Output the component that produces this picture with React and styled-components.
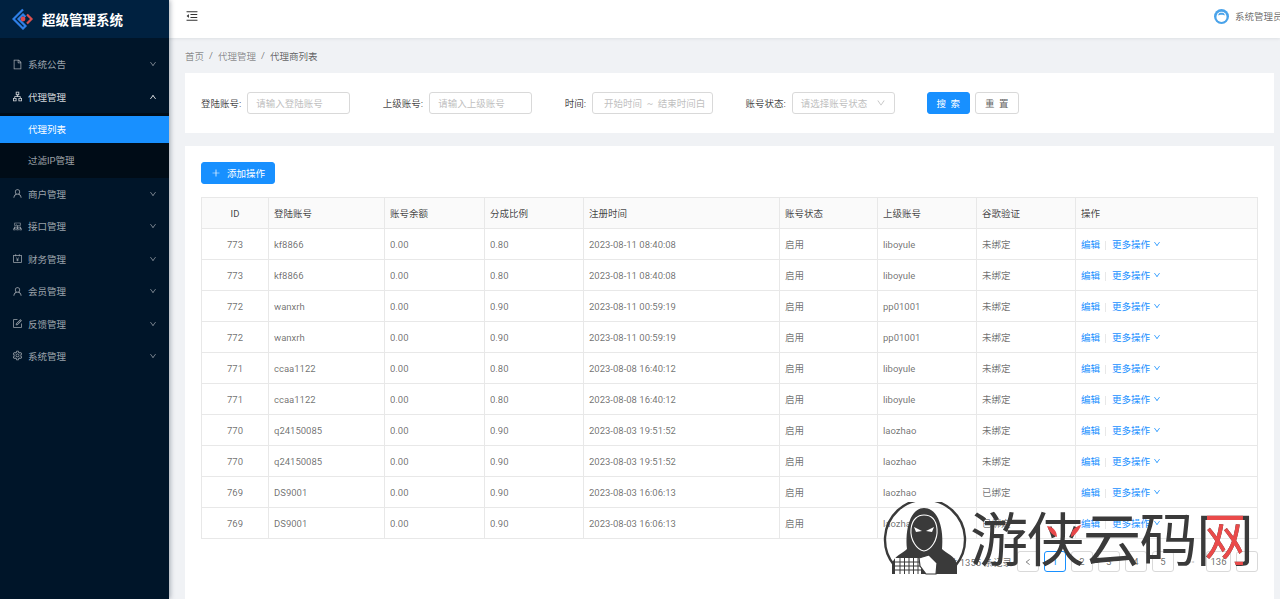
import React from 'react';
import styled, { createGlobalStyle } from 'styled-components';
import {
  AiOutlineFile,
  AiOutlineApartment,
  AiOutlineUser,
  AiOutlineCluster,
  AiOutlineAccountBook,
  AiOutlineForm,
  AiOutlineSetting,
  AiOutlineMenuFold,
  AiOutlineDown,
  AiOutlineUp,
  AiOutlineLeft,
  AiOutlineRight,
  AiOutlinePlus,
} from 'react-icons/ai';

const FONT = 'Roboto, "Noto Sans CJK SC", sans-serif';

const GlobalStyle = createGlobalStyle`
  html, body {
    margin: 0;
    padding: 0;
    height: 599px;
    overflow: hidden;
    background: #f0f2f5;
    font-family: ${FONT};
    font-size: 9.5px;
  }
  * { box-sizing: border-box; }
`;

const Page = styled.div`
  position: relative;
  display: flex;
  width: 1280px;
  height: 599px;
  overflow: hidden;
`;

const Sidebar = styled.aside`
  flex: 0 0 169px;
  background: #001529;
  box-shadow: 1px 0 5px rgba(0, 21, 41, 0.35);
  z-index: 2;
`;

const Brand = styled.div`
  display: flex;
  align-items: center;
  gap: 8px;
  height: 38px;
  padding-left: 12px;
  background: #002140;
  color: #fff;
  font-size: 13.5px;
  font-weight: 700;
`;

const Menu = styled.nav`
  padding-top: 10px;
`;

const MenuRow = styled.div`
  display: flex;
  align-items: center;
  height: 32.4px;
  padding: 0 12px;
  color: ${(p) => (p.$open ? 'rgba(255,255,255,.85)' : 'rgba(255,255,255,.62)')};
  svg.lead {
    width: 11px;
    height: 11px;
    margin-right: 5px;
  }
  svg.arrow {
    width: 8px;
    height: 8px;
    margin-left: auto;
    color: ${(p) => (p.$open ? '#fff' : 'rgba(255,255,255,.55)')};
  }
`;

const SubMenu = styled.div`
  background: #000c17;
  padding-top: 3px;
`;

const SubItem = styled.div`
  display: flex;
  align-items: center;
  height: ${(p) => (p.$active ? '27px' : '35px')};
  padding-left: 28px;
  background: ${(p) => (p.$active ? '#1890ff' : 'transparent')};
  color: ${(p) => (p.$active ? '#fff' : 'rgba(255,255,255,.62)')};
`;

const Main = styled.div`
  flex: 1;
  min-width: 0;
  display: flex;
  flex-direction: column;
`;

const Topbar = styled.header`
  display: flex;
  align-items: center;
  flex: 0 0 38px;
  padding: 0 0 6px 16px;
  background: #fff;
  box-shadow: 0 1px 3px rgba(0, 21, 41, 0.08);
  color: #333;
  svg {
    width: 14px;
    height: 14px;
  }
`;

const UserBox = styled.div`
  display: flex;
  align-items: center;
  gap: 6px;
  margin-left: auto;
  width: 66px;
  flex: none;
  overflow: hidden;
  white-space: nowrap;
  color: rgba(0, 0, 0, 0.6);
  svg {
    flex: none;
    width: 15px;
    height: 15px;
  }
`;

const Content = styled.main`
  flex: 1;
  padding: 0 6px 0 16px;
`;

const Breadcrumb = styled.div`
  display: flex;
  align-items: center;
  gap: 5px;
  height: 35px;
  color: rgba(0, 0, 0, 0.5);
`;

const Crumb = styled.span`
  color: ${(p) => (p.$current ? 'rgba(0,0,0,.62)' : 'rgba(0,0,0,.45)')};
`;

const Card = styled.section`
  background: #fff;
  margin-bottom: 13px;
`;

const SearchCard = styled(Card)`
  display: flex;
  align-items: center;
  height: 60px;
  padding: 0 16px;
  gap: 32.5px;
`;

const Field = styled.label`
  display: flex;
  align-items: center;
  gap: 6px;
  color: rgba(0, 0, 0, 0.75);
  white-space: pre;
`;

const Input = styled.div`
  display: flex;
  align-items: center;
  width: ${(p) => p.$w}px;
  height: 22px;
  padding: 0 ${(p) => p.$pad || 8}px;
  border: 1px solid #d9d9d9;
  border-radius: 3px;
  color: #bfbfbf;
  overflow: hidden;
  white-space: pre;
  svg {
    width: 10px;
    height: 10px;
    margin-left: auto;
    flex: none;
  }
`;

const Buttons = styled.div`
  display: flex;
  gap: 5px;
`;

const Button = styled.button`
  display: inline-flex;
  align-items: center;
  justify-content: center;
  gap: 6px;
  width: ${(p) => p.$w}px;
  height: 22px;
  padding: 0;
  border: 1px solid ${(p) => (p.$primary ? '#1890ff' : '#d9d9d9')};
  border-radius: 3px;
  background: ${(p) => (p.$primary ? '#1890ff' : '#fff')};
  color: ${(p) => (p.$primary ? '#fff' : 'rgba(0,0,0,.65)')};
  font: inherit;
  letter-spacing: ${(p) => (p.$spaced ? '1px' : '0')};
  svg {
    width: 10px;
    height: 10px;
  }
`;

const TableCard = styled(Card)`
  height: 453px;
  margin-bottom: 0;
  padding: 16px 16px 0;
`;

const Table = styled.table`
  width: 1056px;
  margin-top: 13px;
  border-collapse: collapse;
  table-layout: fixed;
  border: 1px solid #e8e8e8;
`;

const Th = styled.th`
  height: 31px;
  padding: 0 5px;
  background: #fafafa;
  border: 1px solid #e8e8e8;
  color: rgba(0, 0, 0, 0.75);
  font-weight: 400;
  text-align: ${(p) => (p.$center ? 'center' : 'left')};
`;

const Td = styled.td`
  height: 31px;
  padding: 0 5px;
  border: 1px solid #e8e8e8;
  color: rgba(0, 0, 0, 0.58);
  text-align: ${(p) => (p.$center ? 'center' : 'left')};
  white-space: nowrap;
`;

const Link = styled.a`
  display: inline-flex;
  align-items: center;
  gap: 3px;
  color: #1890ff;
  svg {
    width: 8px;
    height: 8px;
  }
`;

const Divider = styled.span`
  display: inline-block;
  width: 1px;
  height: 9px;
  margin: 0 6px 0 5px;
  background: #e8e8e8;
  vertical-align: middle;
`;

const Pagination = styled.div`
  display: flex;
  align-items: center;
  justify-content: flex-end;
  gap: 5px;
  width: 1057px;
  margin-top: 12px;
  color: rgba(0, 0, 0, 0.6);
`;

const PageBtn = styled.span`
  display: flex;
  align-items: center;
  justify-content: center;
  width: ${(p) => p.$w || 22}px;
  height: 21px;
  border: 1px solid ${(p) => (p.$active ? '#1890ff' : '#d9d9d9')};
  border-radius: 3px;
  color: ${(p) => (p.$active ? '#1890ff' : 'rgba(0,0,0,.6)')};
  svg {
    width: 8px;
    height: 8px;
  }
`;

const Dots = styled.span`
  width: 22px;
  text-align: center;
  color: #d0d0d0;
`;

const Watermark = styled.div`
  position: absolute;
  left: 883px;
  top: 502px;
  display: flex;
  align-items: flex-start;
  z-index: 5;
  pointer-events: none;
`;

const MarkText = styled.span`
  display: block;
  margin-left: 3px;
  margin-top: -8px;
  font-family: "Noto Sans CJK SC", sans-serif;
  font-size: 58px;
  font-weight: 400;
  line-height: 84px;
  letter-spacing: -1.5px;
  color: #3a3a3a;
  white-space: nowrap;
`;

const MarkNet = styled.span`
  display: inline-block;
  background:
    linear-gradient(#ea4a4a, #ea4a4a) center 62% / 62% 60% no-repeat,
    linear-gradient(#3a3a3a, #3a3a3a);
  -webkit-background-clip: text;
  background-clip: text;
  color: transparent;
  letter-spacing: 0;
`;

const MarkEyes = styled.svg`
  position: absolute;
  left: 163px;
  top: 22px;
`;

const menuTop = [
  { name: '系统公告', icon: AiOutlineFile },
  { name: '代理管理', icon: AiOutlineApartment, open: true },
];

const menuBottom = [
  { name: '商户管理', icon: AiOutlineUser },
  { name: '接口管理', icon: AiOutlineCluster },
  { name: '财务管理', icon: AiOutlineAccountBook },
  { name: '会员管理', icon: AiOutlineUser },
  { name: '反馈管理', icon: AiOutlineForm },
  { name: '系统管理', icon: AiOutlineSetting },
];

const columns = [
  { name: 'ID', w: 67, center: true },
  { name: '登陆账号', w: 116 },
  { name: '账号余额', w: 100 },
  { name: '分成比例', w: 99 },
  { name: '注册时间', w: 196 },
  { name: '账号状态', w: 98 },
  { name: '上级账号', w: 99 },
  { name: '谷歌验证', w: 99 },
  { name: '操作', w: 182 },
];

const base = [
  [773, 'kf8866', '0.80', '2023-08-11 08:40:08', 'liboyule', '未绑定'],
  [772, 'wanxrh', '0.90', '2023-08-11 00:59:19', 'pp01001', '未绑定'],
  [771, 'ccaa1122', '0.80', '2023-08-08 16:40:12', 'liboyule', '未绑定'],
  [770, 'q24150085', '0.90', '2023-08-03 19:51:52', 'laozhao', '未绑定'],
  [769, 'DS9001', '0.90', '2023-08-03 16:06:13', 'laozhao', '已绑定'],
];
const rows = base.flatMap((r) => [r, r]);

const MenuItem = ({ item }) => {
  const Icon = item.icon;
  return (
    <MenuRow $open={item.open}>
      <Icon className="lead" />
      {item.name}
      {item.open ? <AiOutlineUp className="arrow" /> : <AiOutlineDown className="arrow" />}
    </MenuRow>
  );
};

const Logo = () => (
  <svg width="22" height="22" viewBox="0 0 22 22">
    <path d="M11 1.5 L1.5 11 L11 20.5 L13.5 18 L6.5 11 L11 6.5 L13.5 9" fill="none" stroke="#2f7fe6" strokeWidth="2.2" />
    <path d="M15 6.5 L19.5 11 L15 15.5" fill="none" stroke="#d9504f" strokeWidth="2.2" />
    <circle cx="11" cy="11" r="2.4" fill="#e0484c" />
  </svg>
);

const Avatar = () => (
  <svg viewBox="0 0 16 16">
    <circle cx="8" cy="8" r="8" fill="#4aa3ea" />
    <circle cx="8" cy="8.4" r="5.4" fill="#fff" />
    <path d="M4.4 7 C4.6 4.6 6 4 8 4 C10 4 11.4 4.6 11.6 7 C10 6 6 6 4.4 7 Z" fill="#4aa3ea" />
  </svg>
);

const Hacker = () => (
  <svg width="84" height="74" viewBox="0 0 84 74">
    <path d="M11 63 A40 40 0 1 1 73 63" fill="none" stroke="#3a3a3a" strokeWidth="2.4" />
    <path d="M9 72 L9 62 C11 54 20 51 24 47 C22 28 27 6 41 6 C56 6 61 28 59 47 C63 51 72 54 74 62 L74 72 Z" fill="#3a3a3a" />
    <path d="M28 27 C29 17 35 13 41 13 C48 13 53 17 54 27 C55 38 48 48 41 49 C34 48 27 38 28 27 Z" fill="#3a3a3a" stroke="#fff" strokeWidth="1.1" />
    <path d="M31 25 L39 29 L33 30 Z M51 25 L43 29 L49 30 Z" fill="#fff" />
    <rect x="12" y="56" width="26" height="16" fill="#fff" />
    <path d="M12 60 H38 M12 64 H38 M12 68 H38 M17 56 V72 M21.500 56 V72 M26 56 V72 M30.500 56 V72 M35 56 V72" stroke="#3a3a3a" strokeWidth="1" />
    <path d="M36 56 L46 53 L54 61 L53 72 L43 72 L37 64 Z" fill="#fff" stroke="#3a3a3a" strokeWidth="1.2" />
  </svg>
);

export default function App() {
  return (
    <Page>
      <GlobalStyle />
      <Sidebar>
        <Brand>
          <Logo />
          超级管理系统
        </Brand>
        <Menu>
          {menuTop.map((item) => (
            <MenuItem key={item.name} item={item} />
          ))}
          <SubMenu>
            <SubItem $active>代理列表</SubItem>
            <SubItem>过滤IP管理</SubItem>
          </SubMenu>
          {menuBottom.map((item) => (
            <MenuItem key={item.name} item={item} />
          ))}
        </Menu>
      </Sidebar>

      <Main>
        <Topbar>
          <AiOutlineMenuFold />
          <UserBox>
            <Avatar />
            系统管理员
          </UserBox>
        </Topbar>

        <Content>
          <Breadcrumb>
            <Crumb>首页</Crumb>/<Crumb>代理管理</Crumb>/<Crumb $current>代理商列表</Crumb>
          </Breadcrumb>

          <SearchCard>
            <Field>
              登陆账号:
              <Input $w={103}>请输入登陆账号</Input>
            </Field>
            <Field>
              上级账号:
              <Input $w={103}>请输入上级账号</Input>
            </Field>
            <Field>
              时间:
              <Input $w={121} $pad={11}>开始时间  ~  结束时间白</Input>
            </Field>
            <Field>
              账号状态:
              <Input $w={103}>
                请选择账号状态
                <AiOutlineDown />
              </Input>
            </Field>
            <Buttons>
              <Button $primary $spaced $w={43}>搜 索</Button>
              <Button $spaced $w={44}>重 置</Button>
            </Buttons>
          </SearchCard>

          <TableCard>
            <Button $primary $w={74}>
              <AiOutlinePlus />
              添加操作
            </Button>
            <Table>
              <colgroup>
                {columns.map((c) => (
                  <col key={c.name} style={{ width: c.w }} />
                ))}
              </colgroup>
              <thead>
                <tr>
                  {columns.map((c) => (
                    <Th key={c.name} $center={c.center}>{c.name}</Th>
                  ))}
                </tr>
              </thead>
              <tbody>
                {rows.map((r, i) => (
                  <tr key={i}>
                    <Td $center>{r[0]}</Td>
                    <Td>{r[1]}</Td>
                    <Td>0.00</Td>
                    <Td>{r[2]}</Td>
                    <Td>{r[3]}</Td>
                    <Td>启用</Td>
                    <Td>{r[4]}</Td>
                    <Td>{r[5]}</Td>
                    <Td>
                      <Link>编辑</Link>
                      <Divider />
                      <Link>
                        更多操作
                        <AiOutlineDown />
                      </Link>
                    </Td>
                  </tr>
                ))}
              </tbody>
            </Table>
            <Pagination>
              <span>共 1355 条记录</span>
              <PageBtn><AiOutlineLeft /></PageBtn>
              <PageBtn $active>1</PageBtn>
              <PageBtn>2</PageBtn>
              <PageBtn>3</PageBtn>
              <PageBtn>4</PageBtn>
              <PageBtn>5</PageBtn>
              <Dots>•••</Dots>
              <PageBtn $w={25}>136</PageBtn>
              <PageBtn><AiOutlineRight /></PageBtn>
            </Pagination>
          </TableCard>
        </Content>
      </Main>

      <Watermark>
        <Hacker />
        <MarkText>
          游侠云码<MarkNet>网</MarkNet>
        </MarkText>
        <MarkEyes width="40" height="14" viewBox="0 0 40 14">
          <path d="M1 2 C3 8 7 11 11 13 C11 8 8 3 1 2 Z M35 1 C33 7 29 11 25 13 C25 7 28 3 35 1 Z" fill="#e8484a" />
        </MarkEyes>
      </Watermark>
    </Page>
  );
}
